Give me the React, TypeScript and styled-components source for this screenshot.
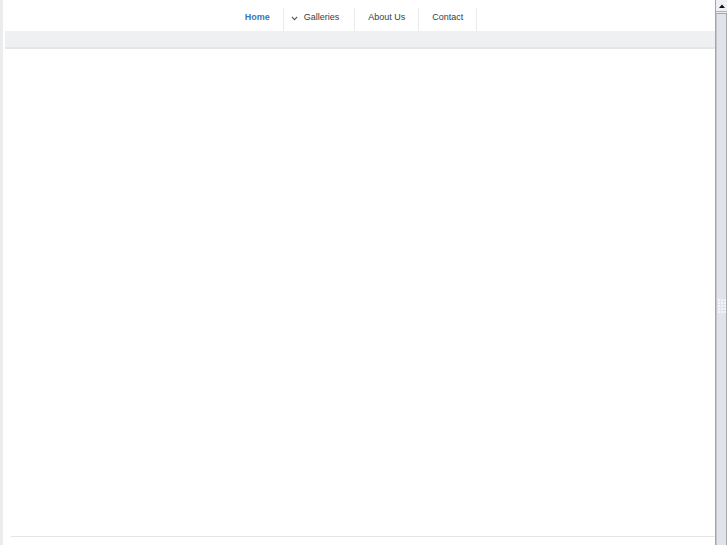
import React from "react";
import styled, { createGlobalStyle } from "styled-components";

const GlobalStyle = createGlobalStyle`
  html, body {
    margin: 0;
    height: 100%;
    overflow: hidden;
  }
  body {
    background: #ffffff;
    font-family: "Liberation Sans", Arial, sans-serif;
  }
`;

const Shell = styled.div`
  display: flex;
  height: 100vh;
`;

const Page = styled.div`
  flex: 1;
  display: flex;
  flex-direction: column;
  border-left: 3px solid #ebecee;
  min-width: 0;
`;

const Header = styled.header`
  height: 31px;
  display: flex;
  justify-content: center;
  padding-right: 10px;
  padding-top: 8px;
  box-sizing: border-box;
`;

const NavList = styled.ul`
  list-style: none;
  margin: 0;
  padding: 0;
  display: flex;
`;

const NavItem = styled.li<{ $active?: boolean; $padLeft?: number; $padRight?: number }>`
  display: flex;
  align-items: center;
  gap: 6px;
  padding: 0 ${(p) => (p.$padRight ?? 13)}px 5px ${(p) => (p.$padLeft ?? 13)}px;
  border-right: 1px solid #e8ecf0;
  font-size: 9px;
  font-weight: ${(p) => (p.$active ? 700 : 400)};
  color: ${(p) => (p.$active ? "#3a78b5" : "#3c3c3c")};
  cursor: pointer;
`;

const Chevron = styled.svg`
  width: 7px;
  height: 5px;
  margin-top: 3px;
`;

const SubBar = styled.div`
  height: 16px;
  margin-left: 2px;
  background: #eef0f2;
  border-bottom: 2px solid #e3e5e8;
`;

const Content = styled.main`
  flex: 1;
  background: #ffffff;
`;

const FooterRule = styled.div`
  height: 1px;
  margin-left: 8px;
  background: #e4e4e4;
`;

const FooterSpace = styled.div`
  height: 8px;
`;

const Scrollbar = styled.div`
  width: 12px;
  display: flex;
  flex-direction: column;
  background: #e9ebf0;
  border-left: 1px solid #a3a5aa;
  box-sizing: border-box;
`;

const ScrollButton = styled.div`
  height: 12px;
  display: flex;
  align-items: center;
  justify-content: center;
  background: #eef0f3;
  border-bottom: 1px solid #b0b2b6;
  box-sizing: border-box;
`;

const Arrow = styled.svg`
  width: 6px;
  height: 4px;
`;

const Thumb = styled.div`
  flex: 1;
  display: flex;
  flex-direction: column;
  align-items: center;
  padding-top: 285px;
  margin-top: 1px;
  background: #e1e3ea;
  border: 1px solid #a6a8ad;
  border-left: 1px solid #c4c6cc;
  border-bottom: none;
`;

const Grip = styled.div`
  display: grid;
  grid-template-columns: repeat(3, 2px);
  grid-auto-rows: 2px;
  gap: 1px;
`;

const GripDot = styled.span`
  background: #f4f5f8;
`;

export default function App() {
  return (
    <>
      <GlobalStyle />
      <Shell>
        <Page>
          <Header>
            <NavList>
              <NavItem $active $padLeft={14}>Home</NavItem>
              <NavItem $padLeft={7} $padRight={15}>
                <Chevron viewBox="0 0 7 5">
                  <path d="M0.8 0.8 L3.5 3.6 L6.2 0.8" fill="none" stroke="#555" strokeWidth="1.1" />
                </Chevron>
                Galleries
              </NavItem>
              <NavItem>About Us</NavItem>
              <NavItem>Contact</NavItem>
            </NavList>
          </Header>
          <SubBar />
          <Content />
          <FooterRule />
          <FooterSpace />
        </Page>
        <Scrollbar>
          <ScrollButton>
            <Arrow viewBox="0 0 6 4">
              <path d="M0 4 L3 0.5 L6 4 Z" fill="#111" />
            </Arrow>
          </ScrollButton>
          <Thumb>
            <Grip>
              {Array.from({ length: 15 }).map((_, i) => (
                <GripDot key={i} />
              ))}
            </Grip>
          </Thumb>
        </Scrollbar>
      </Shell>
    </>
  );
}
